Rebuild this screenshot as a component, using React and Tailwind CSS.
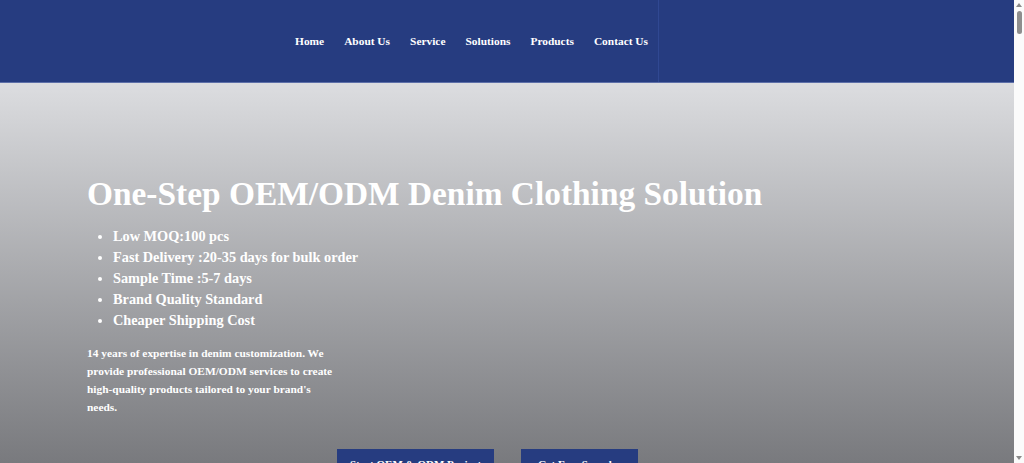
export default function App() {
  const nav = ["Home", "About Us", "Service", "Solutions", "Products", "Contact Us"];
  const items = [
    "Low MOQ:100 pcs",
    "Fast Delivery :20-35 days for bulk order",
    "Sample Time :5-7 days",
    "Brand Quality Standard",
    "Cheaper Shipping Cost",
  ];
  const serif = { fontFamily: '"Liberation Serif", "DejaVu Serif", serif' };
  return (
    <div className="bg-white" style={serif}>
      <div className="w-[1014px] min-h-[9000px]">
        <header className="h-[83px] bg-[#263c80] border-b border-[#5d6fa8] flex">
          <div className="w-[659px] border-r border-[#304892] flex justify-end items-start pt-[33px] pr-[10px]">
            <nav className="flex gap-[20px] text-white font-bold text-[11.4px] leading-[16px]">
              {nav.map((n) => (
                <span key={n}>{n}</span>
              ))}
            </nav>
          </div>
          <div className="flex-1" />
        </header>
        <section className="h-[420px] bg-gradient-to-b from-[#dcdde0] to-[#6f7074] pt-[91px] pl-[87px] text-white">
          <h1 className="text-[33.4px] leading-[40px] font-bold">
            One-Step OEM/ODM Denim Clothing Solution
          </h1>
          <ul className="mt-[12px] pl-[26px] list-disc text-[14.3px] leading-[21px] font-bold">
            {items.map((t) => (
              <li key={t}>{t}</li>
            ))}
          </ul>
          <p className="mt-[13px] w-[250px] text-[11.4px] leading-[18px] font-bold">
            14 years of expertise in denim customization. We provide professional OEM/ODM services to create high-quality products tailored to your brand's needs.
          </p>
          <div className="mt-[33px] ml-[250px] flex gap-[27px] text-[11px] font-bold">
            <button className="w-[157px] h-[42px] bg-[#263c80] text-white flex justify-center pt-[7px]">Start OEM & ODM Project</button>
            <button className="w-[117px] h-[42px] bg-[#263c80] text-white flex justify-center pt-[7px]">Get Free Samples</button>
          </div>
        </section>
      </div>
      <div className="fixed top-0 right-0 w-[10px] h-[463px] bg-[#fbfbfb] flex flex-col items-center">
        <div className="mt-[3px] w-0 h-0 border-l-[3px] border-r-[3px] border-b-[4px] border-l-transparent border-r-transparent border-b-[#8a8a8a]" />
        <div className="mt-[4px] w-[5px] h-[23px] rounded-full bg-[#8e8e8e]" />
        <div className="flex-1" />
        <div className="mb-[3px] w-0 h-0 border-l-[3px] border-r-[3px] border-t-[4px] border-l-transparent border-r-transparent border-t-[#8a8a8a]" />
      </div>
    </div>
  );
}
